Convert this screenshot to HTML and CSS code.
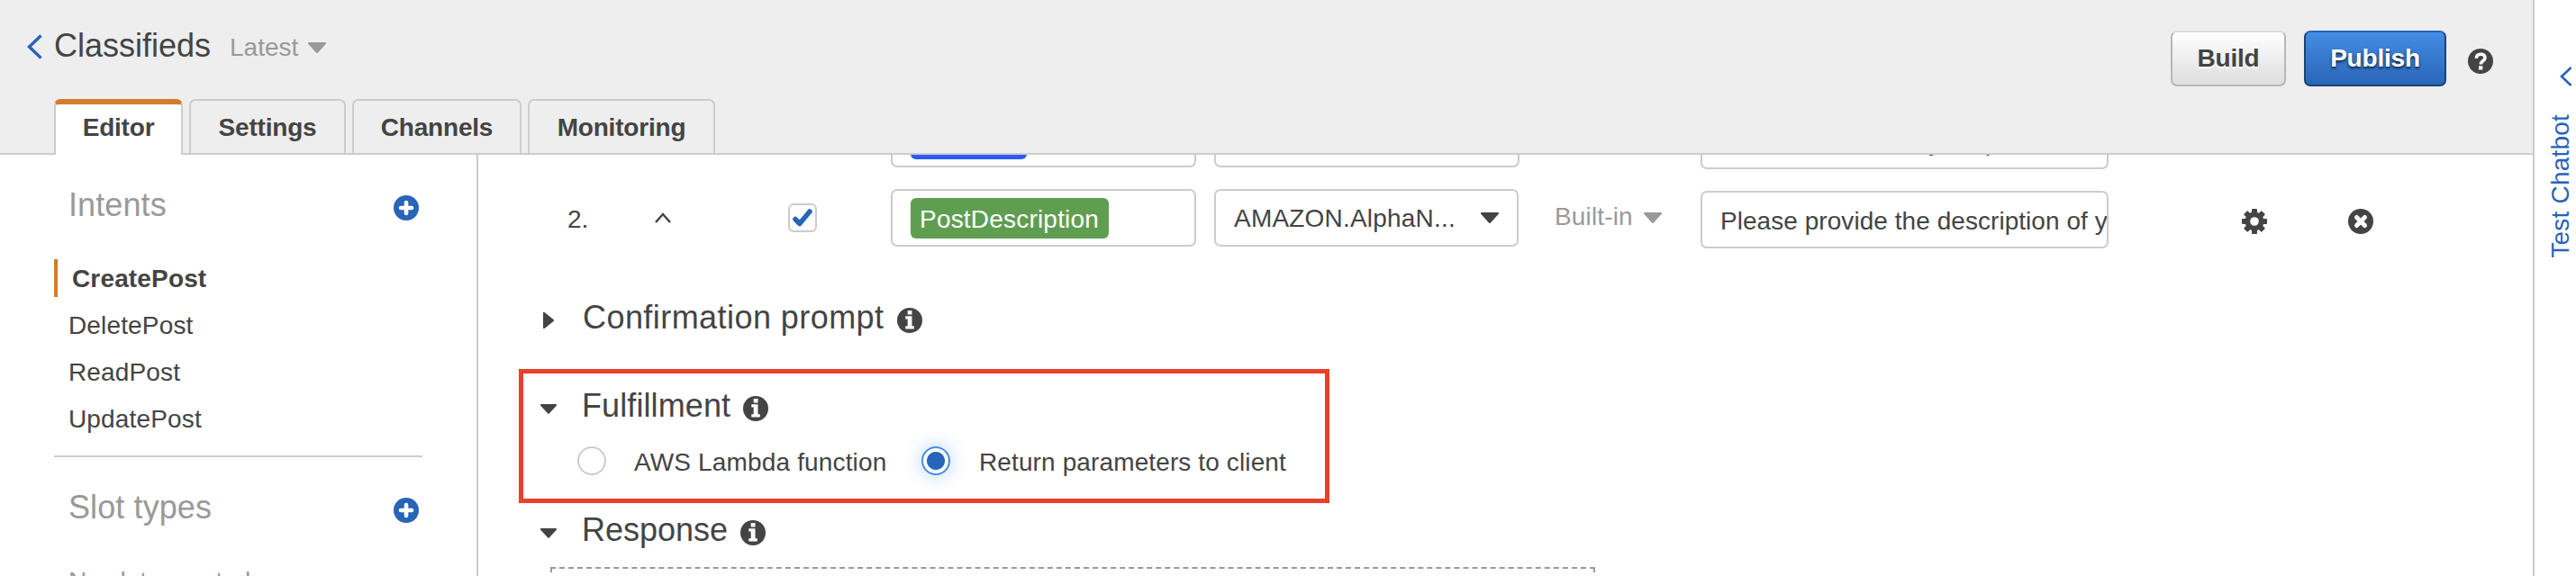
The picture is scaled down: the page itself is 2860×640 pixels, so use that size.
FILE: index.html
```html
<!DOCTYPE html>
<html lang="en">
<head>
<meta charset="utf-8">
<title>Classifieds</title>
<link rel="stylesheet" href="styles.css">
</head>
<body>
<svg class="defs" aria-hidden="true">
  <symbol id="plus" viewBox="0 0 28 28"><circle cx="14" cy="14" r="14" fill="#2864b8"/><path d="M14 8v12M8 14h12" stroke="#fff" stroke-width="4.6" stroke-linecap="round"/></symbol>
  <symbol id="info" viewBox="0 0 28 28"><circle cx="14" cy="14" r="14" fill="#444"/><path fill="#fff" d="M11.700 3h4.800v4.400h-4.800zM9.300 9.300h7.200v10.900h2.300v3.200h-9.500v-3.200h2.400v-7.600h-2.400z"/></symbol>
  <symbol id="down" viewBox="0 0 20 12"><path fill="currentColor" d="M1 0h18a1 1 0 0 1 .8 1.700L11 11.400a1.300 1.300 0 0 1-2 0L.2 1.700A1 1 0 0 1 1 0z"/></symbol>
</svg>
<div class="app">
  <div class="workspace">
    <header class="header">
      <div class="title-row">
        <svg class="back" viewBox="0 0 17 28"><path d="M15.500 1.500L2.500 14l13 12.500" fill="none" stroke="#2864b8" stroke-width="3.400"/></svg>
        <h1 class="title">Classifieds</h1>
        <span class="version">Latest</span>
        <svg class="caret version-caret"><use href="#down"/></svg>
        <div class="actions">
          <button class="btn">Build</button>
          <button class="btn primary">Publish</button>
          <svg class="help" viewBox="0 0 28 28"><circle cx="14" cy="14" r="14" fill="#444"/><path d="M9.300 10.800c.2-3 2.100-4.500 4.900-4.500 2.900 0 4.800 1.400 4.800 3.900 0 3.400-4.600 3.300-4.600 7.200" fill="none" stroke="#fff" stroke-width="3.600"/><path d="M12 19.300h4.400v4.200H12z" fill="#fff"/></svg>
        </div>
      </div>
      <nav class="tabs">
        <a class="tab active">Editor</a>
        <a class="tab settings">Settings</a>
        <a class="tab channels">Channels</a>
        <a class="tab monitoring">Monitoring</a>
      </nav>
    </header>
    <div class="body">
      <aside class="sidebar">
        <div class="side-head"><h2>Intents</h2><svg class="add"><use href="#plus"/></svg></div>
        <ul class="intents">
          <li class="current">CreatePost</li>
          <li>DeletePost</li>
          <li>ReadPost</li>
          <li>UpdatePost</li>
        </ul>
        <div class="side-head slots-head"><h2>Slot types</h2><svg class="add"><use href="#plus"/></svg></div>
        <p class="empty">No slots created</p>
      </aside>
      <main class="main">
        <div class="slot-row first">
          <span></span><span></span><span></span>
          <div class="field"><span class="tag blue"></span></div>
          <div class="field"></div>
          <span></span>
          <div class="field prompt">What is the title of your post?</div>
        </div>
        <div class="slot-row">
          <span class="num">2.</span>
          <svg class="up" viewBox="0 0 18 12"><path d="M1 11l8-9 8 9" fill="none" stroke="#444" stroke-width="2.400"/></svg>
          <span class="check"><svg viewBox="0 0 22 20"><path d="M3 11.500l4.800 5L19 3" fill="none" stroke="#2864b8" stroke-width="5.500" stroke-linejoin="round" stroke-linecap="round"/></svg></span>
          <div class="field"><span class="tag">PostDescription</span></div>
          <div class="field select"><span>AMAZON.AlphaN...</span><svg class="caret"><use href="#down"/></svg></div>
          <div class="builtin"><span>Built-in</span><svg class="caret"><use href="#down"/></svg></div>
          <div class="field prompt">Please provide the description of your post</div>
          <svg class="gear" viewBox="0 0 28 28"><g fill="#444"><rect x="11" width="6" height="28" rx="1"/><rect x="11" width="6" height="28" rx="1" transform="rotate(45 14 14)"/><rect x="11" width="6" height="28" rx="1" transform="rotate(90 14 14)"/><rect x="11" width="6" height="28" rx="1" transform="rotate(135 14 14)"/><circle cx="14" cy="14" r="10.500"/></g><circle cx="14" cy="14" r="4.800" fill="#fff"/></svg>
          <svg class="remove" viewBox="0 0 28 28"><circle cx="14" cy="14" r="14" fill="#444"/><path d="M9.500 9.500l9 9m0-9l-9 9" stroke="#fff" stroke-width="5" stroke-linecap="round"/></svg>
        </div>
        <section class="section confirm">
          <svg class="closed" viewBox="0 0 12 18"><path fill="#444" d="M0 0h1.500L11.500 8q.8 1 0 2L1.500 18H0z"/></svg>
          <h3>Confirmation prompt</h3><svg class="info"><use href="#info"/></svg>
        </section>
        <div class="highlight">
          <section class="section fulfillment">
            <svg class="open"><use href="#down"/></svg>
            <h3>Fulfillment</h3><svg class="info"><use href="#info"/></svg>
          </section>
          <div class="radios">
            <span class="radio"></span><span class="lambda">AWS Lambda function</span>
            <span class="radio on"></span><span class="client">Return parameters to client</span>
          </div>
        </div>
        <section class="section response">
          <svg class="open"><use href="#down"/></svg>
          <h3>Response</h3><svg class="info"><use href="#info"/></svg>
        </section>
        <div class="dashed"></div>
      </main>
    </div>
  </div>
  <aside class="rail">
    <svg class="rail-arrow" viewBox="0 0 14 22"><path d="M12.500 1L2 11l10.500 10" fill="none" stroke="#2864b8" stroke-width="2.600"/></svg>
    <span class="rail-label">Test Chatbot</span>
  </aside>
</div>
</body>
</html>
```
FILE: styles.css
```css
* { box-sizing: border-box; }
body {
  margin: 0;
  width: 2860px;
  height: 640px;
  overflow: hidden;
  background: #fff;
  color: #444;
  font: 28px/32px "Liberation Sans", Arial, sans-serif;
}
h1, h2, h3, p, ul { margin: 0; padding: 0; font-weight: 400; }
h1, h2, h3 { font-size: 36px; line-height: 42px; white-space: nowrap; }
svg { display: block; flex: none; }
.defs { position: absolute; width: 0; height: 0; }
.app { display: flex; height: 640px; overflow: hidden; }
.workspace { width: 2812px; flex: none; }

.header {
  height: 172px;
  background: #eee;
  border-bottom: 2px solid #ccc;
}
.title-row { display: flex; height: 110px; padding-left: 30px; }
.back { width: 17px; height: 28px; margin-top: 38px; }
.title { margin: 30px 0 0 13px; width: 175px; }
.version { margin: 37px 0 0 20px; width: 78px; color: #999; }
.caret { width: 20px; height: 12px; }
.version-caret { margin: 47px 0 0 9px; color: #999; }
.actions { display: flex; margin: 34px 44px 0 auto; }
.btn {
  width: 128px;
  height: 62px;
  margin: 0 20px 0 0;
  padding: 0;
  border: 2px solid #b7b7b7;
  border-top-color: #ddd;
  border-radius: 7px;
  background: linear-gradient(#fff, #ddd);
  color: #444;
  font: bold 28px/32px "Liberation Sans", Arial, sans-serif;
  letter-spacing: -.2px;
  text-shadow: 0 2px 2px #fff;
}
.btn.primary {
  width: 158px;
  margin-right: 24px;
  border-color: #1a4378;
  border-top-color: #2864b8;
  background: linear-gradient(#448de5, #2a65b7);
  color: #fff;
  text-shadow: 0 2px 3px #123;
}
.help { width: 28px; height: 28px; margin-top: 20px; }
.tabs { display: flex; gap: 7px; padding-left: 60px; height: 62px; }
.tab {
  height: 60px;
  padding-top: 14px;
  border: 2px solid #ccc;
  border-bottom: 0;
  border-radius: 7px 7px 0 0;
  font-weight: bold;
  letter-spacing: -.2px;
  text-align: center;
}
.tab.active {
  width: 143px;
  height: 62px;
  padding-top: 10px;
  border-top: 6px solid #d47c2e;
  background: #fff;
}
.settings { width: 174px; }
.channels { width: 188px; }
.monitoring { width: 208px; }

.body { display: flex; height: 468px; overflow: hidden; }
.sidebar { width: 531px; flex: none; margin-right: 1px; padding-left: 60px; border-right: 2px solid #ccc; }
.side-head {
  display: flex;
  justify-content: space-between;
  width: 409px;
  height: 75px;
  padding: 33px 4px 0 16px;
  color: #999;
}
.side-head h2 { padding-top: 2px; letter-spacing: .1px; }
.add { width: 28px; height: 28px; margin-top: 12px; }
.intents {
  width: 409px;
  height: 261px;
  padding-top: 41px;
  border-bottom: 2px solid #ccc;
  list-style: none;
}
.intents li { height: 42px; margin-bottom: 10px; padding: 6px 0 0 16px; letter-spacing: .15px; }
.intents .current { border-left: 4px solid #d47c2e; font-weight: bold; }
.empty { margin-top: 47px; padding-left: 16px; color: #999; white-space: nowrap; }

.main { width: 2280px; }
.slot-row {
  display: grid;
  grid-template-columns: 98px 98px 164px 359px 378px 162px 602px 118px 28px;
  height: 64px;
  margin-top: 24px;
  padding-left: 97px;
}
.slot-row.first { margin-top: -50px; }
.num { padding: 18px 0 0 1px; }
.up { width: 18px; height: 12px; margin: 26px 0 0 0; }
.check { width: 32px; height: 32px; margin: 16px 0 0 50px; border: 2px solid #ccc; border-radius: 6px; }
.check svg { width: 22px; height: 20px; margin: 4px 0 0 3px; }
.field { width: 339px; height: 64px; border: 2px solid #ccc; border-radius: 7px; white-space: nowrap; }
.tag {
  display: block;
  width: 220px;
  height: 45px;
  margin: 8px 0 0 20px;
  padding: 8px 0 0 10px;
  border-radius: 6px;
  background: #5f9e50;
  color: #fff;
  letter-spacing: .2px;
}
.tag.blue { width: 129px; background: #2b5af5; }
.select { width: 338px; display: flex; padding: 15px 0 0 20px; }
.select span { width: 253px; letter-spacing: .2px; }
.select .caret { margin: 9px 0 0 21px; }
.builtin { display: flex; gap: 11px; color: #999; padding-top: 15px; }
.builtin span { width: 88px; white-space: nowrap; letter-spacing: .15px; }
.builtin .caret { margin-top: 11px; }
.field.prompt { width: 453px; margin-top: 2px; padding: 16px 0 0 20px; overflow: hidden; letter-spacing: .05px; }
.gear, .remove { width: 28px; height: 28px; margin: 22px 0 0 -1px; }

.section { display: flex; height: 42px; }
.section h3 { margin-left: 28px; padding-top: 2px; }
.info { width: 28px; height: 28px; margin: 12px 0 0 14px; }
.confirm { height: 98px; padding: 56px 0 0 71px; }
.confirm h3 { letter-spacing: .44px; }
.closed { width: 12px; height: 18px; margin: 17px 4px 0 0; }
.open { width: 18px; height: 11px; margin-top: 21px; }
.highlight {
  width: 900px;
  height: 149px;
  margin: 38px 0 0 44px;
  padding: 13px 0 0 19px;
  border: 5px solid #e94028;
}
.fulfillment h3 { letter-spacing: .1px; }
.radios { display: flex; padding: 26px 0 0 41px; }
.radio { width: 32px; height: 32px; border: 2px solid #ccc; border-radius: 50%; }
.radio.on {
  border-color: #448de5;
  background: radial-gradient(circle, #2864b8 9.500px, #fff 10.500px);
  box-shadow: 0 0 20px rgba(68, 141, 229, .4);
}
.lambda { width: 319px; margin: 2px 0 0 31px; letter-spacing: .15px; }
.client { margin: 2px 0 0 32px; letter-spacing: .12px; }
.response { height: 49px; padding: 7px 0 0 68px; }
.dashed { width: 1160px; height: 100px; margin: 22px 0 0 79px; border: 2px dashed #999; }

.rail { width: 48px; flex: none; border-left: 2px solid #ccc; padding-left: 13px; }
.rail-arrow { width: 14px; height: 22px; margin: 74px 0 0 15px; }
.rail-label {
  display: block;
  margin-top: 31px;
  writing-mode: vertical-rl;
  transform: rotate(180deg);
  color: #2864b8;
  letter-spacing: .2px;
  white-space: nowrap;
}
```
